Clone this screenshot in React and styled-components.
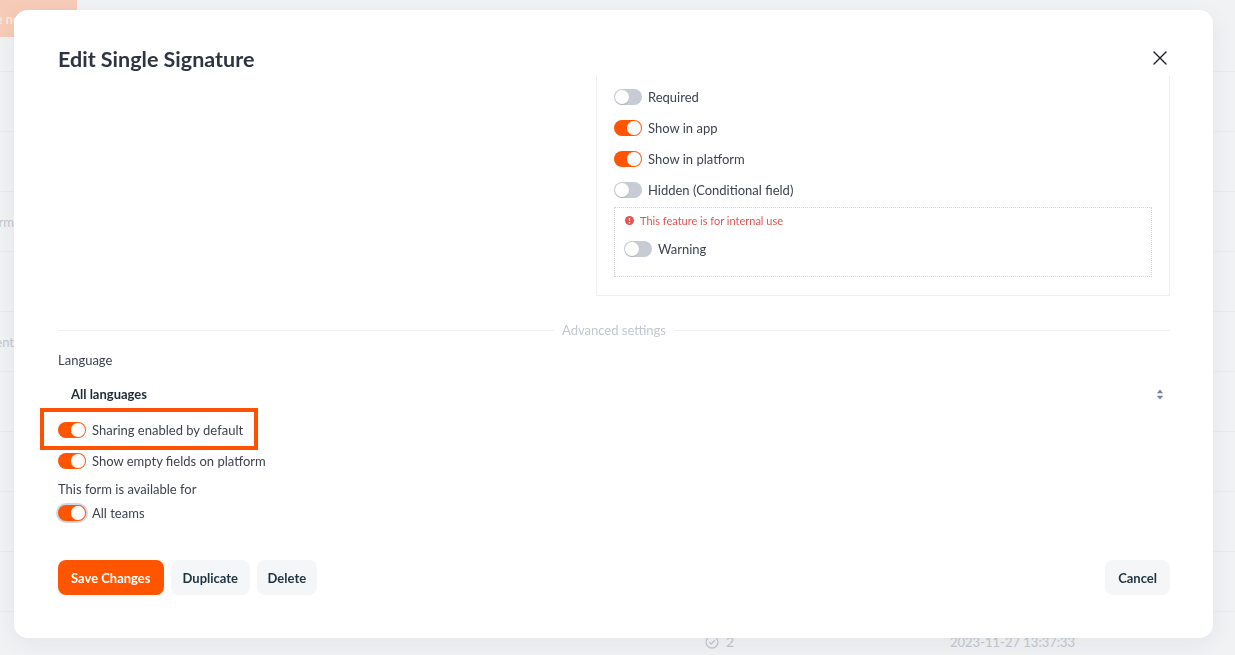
import React from "react";
import styled, { createGlobalStyle, css } from "styled-components";

const GlobalStyle = createGlobalStyle`
  html, body { margin: 0; padding: 0; }
  body {
    font-family: Lato, "Liberation Sans", Arial, sans-serif;
    background: #f1f2f4;
    -webkit-font-smoothing: antialiased;
  }
  * { box-sizing: border-box; }
`;

const ORANGE = "#ff5500";

/* ---------- background page (faded) ---------- */
const Page = styled.div`
  width: 100%;
  height: 655px;
  overflow: hidden;
  background: #f1f2f4;
`;

const TopArea = styled.div`
  height: 72px;
  border-bottom: 1px solid #e9eaed;
`;

const FadedButton = styled.div`
  display: inline-flex;
  align-items: center;
  height: 37px;
  margin-left: -52px;
  padding: 0 16px;
  border-radius: 0 0 10px 10px;
  background: #f6cbb7;
  color: #fbe9e0;
  font-size: 13px;
  font-weight: 700;
  white-space: nowrap;
`;

const BgRow = styled.div`
  display: grid;
  grid-template-columns: 14px 686px 250px 1fr;
  height: 60px;
  align-items: center;
  border-bottom: 1px solid #e9eaed;
  color: #c3c7ce;
  font-size: 13px;
`;

const ClipCell = styled.div`
  display: flex;
  justify-content: flex-end;
  overflow: hidden;
  white-space: nowrap;
`;

const StatusCell = styled.div`
  display: flex;
  align-items: center;
  gap: 7px;
  padding-left: 5px;
  font-size: 14px;
`;

/* ---------- modal ---------- */
const Modal = styled.div`
  position: fixed;
  top: 10px;
  left: 14px;
  width: 1199px;
  height: 628px;
  background: #fff;
  border-radius: 14px;
  box-shadow: 0 6px 24px rgba(20, 30, 50, 0.06);
  padding: 0 43px 43px 44px;
  display: flex;
  flex-direction: column;
`;

const Header = styled.div`
  display: flex;
  align-items: center;
  justify-content: space-between;
  padding-top: 35px;
  margin-bottom: 3px;
`;

const Title = styled.h2`
  margin: 0;
  font-size: 21.5px;
  line-height: 28px;
  font-weight: 700;
  color: #2e3440;
`;

const CloseButton = styled.button`
  border: 0;
  background: none;
  padding: 0;
  width: 16px;
  height: 16px;
  margin-right: 2px;
  margin-top: -2px;
  display: flex;
  align-items: center;
  justify-content: center;
  cursor: pointer;
`;

const TopGrid = styled.div`
  display: grid;
  grid-template-columns: 1fr 574px;
`;

const Panel = styled.div`
  border: 1px solid #eeeff1;
  border-top: none;
  padding: 5px 17px 18px;
`;

const Row = styled.div`
  display: flex;
  align-items: center;
  gap: 6px;
  height: ${(p) => p.$h || 31}px;
  width: fit-content;
  position: relative;
  ${(p) =>
    p.$highlight &&
    css`
      margin-top: 2.5px;
      &::after {
        content: "";
        position: absolute;
        left: -18px;
        right: -15px;
        top: -6.5px;
        bottom: -4.5px;
        border: 4px solid #ff5200;
        pointer-events: none;
      }
    `}
`;

const Label = styled.span`
  font-size: 13px;
  line-height: 16px;
  color: #3d4350;
`;

const ToggleTrack = styled.span`
  display: inline-block;
  position: relative;
  flex: none;
  width: 28px;
  height: 16px;
  border-radius: 8px;
  background: ${(p) => (p.$on ? ORANGE : "#c6cbd4")};
  box-shadow: ${(p) => (p.$focus ? "0 0 0 2px rgba(170,182,205,0.55)" : "none")};
  &::after {
    content: "";
    position: absolute;
    top: 1px;
    left: ${(p) => (p.$on ? "13px" : "1px")};
    width: 14px;
    height: 14px;
    border-radius: 50%;
    background: #fff;
    box-shadow: ${(p) =>
      p.$on ? "0 0 0 0.5px rgba(255,120,60,0.6)" : "0 1px 1px rgba(0,0,0,0.12)"};
  }
`;

const InfoBox = styled.div`
  margin-top: 2px;
  border: 1px dotted #cfd2d8;
  padding: 5px 9px 17px;
  display: flex;
  flex-direction: column;
  gap: 12px;
`;

const Notice = styled.div`
  display: flex;
  align-items: center;
  gap: 6px;
  height: 14px;
  margin-left: 1px;
  font-size: 11px;
  color: #e25454;
`;

const Divider = styled.div`
  margin-top: 27px;
  display: flex;
  align-items: center;
  gap: 8px;
  font-size: 13px;
  line-height: 14px;
  color: #c3c7cf;
  &::before,
  &::after {
    content: "";
    flex: 1;
    height: 1px;
    background: #eef0f2;
  }
`;

const SectionLabel = styled.div`
  font-size: 13px;
  line-height: 16px;
  color: #3d4350;
  margin-top: ${(p) => p.$mt || 0}px;
`;

const Select = styled.div`
  margin-top: 8px;
  height: 36px;
  display: flex;
  align-items: center;
  justify-content: space-between;
  padding: 0 6px 0 13px;
  font-size: 13px;
  font-weight: 700;
  color: #1c2b36;
`;

const Footer = styled.div`
  margin-top: auto;
  display: flex;
  align-items: center;
  gap: 7px;
`;

const Button = styled.button`
  height: 35px;
  padding: 0 ${(p) => p.$px || 13}px;
  border: 0;
  border-radius: 8px;
  font-family: inherit;
  font-size: 13px;
  font-weight: 700;
  cursor: pointer;
  background: ${(p) => (p.$primary ? ORANGE : "#f5f6f7")};
  color: ${(p) => (p.$primary ? "#fff" : "#1e3340")};
  ${(p) => p.$right && css`margin-left: auto;`}
`;

function Toggle({ on, focus }) {
  return <ToggleTrack $on={on} $focus={focus} />;
}

function ToggleRow({ on, focus, children, h, highlight }) {
  return (
    <Row $h={h} $highlight={highlight}>
      <Toggle on={on} focus={focus} />
      <Label>{children}</Label>
    </Row>
  );
}

const CloseIcon = () => (
  <svg width="14" height="14" viewBox="0 0 14 14">
    <path d="M1 1L13 13M13 1L1 13" stroke="#1d1f24" strokeWidth="1.4" strokeLinecap="round" />
  </svg>
);

const AlertIcon = () => (
  <svg width="9" height="9" viewBox="0 0 10 10">
    <circle cx="5" cy="5" r="5" fill="#e25454" />
    <rect x="4.3" y="2" width="1.4" height="3.8" rx="0.7" fill="#fff" />
    <circle cx="5" cy="7.6" r="0.8" fill="#fff" />
  </svg>
);

const SortIcon = () => (
  <svg width="8" height="11" viewBox="0 0 8 11">
    <path d="M4 0.5L7.2 4.2H0.8Z" fill="#7a8499" />
    <path d="M4 10.5L7.2 6.8H0.8Z" fill="#7a8499" />
  </svg>
);

const CheckCircle = () => (
  <svg width="14" height="14" viewBox="0 0 14 14">
    <circle cx="7" cy="7" r="6" fill="none" stroke="#c3c7ce" strokeWidth="1.3" />
    <path d="M4.3 7.2L6.2 9L9.8 5.2" fill="none" stroke="#c3c7ce" strokeWidth="1.3" />
  </svg>
);

export default function App() {
  return (
    <>
      <GlobalStyle />
      <Page>
        <TopArea>
          <FadedButton>Create new form</FadedButton>
        </TopArea>
        <BgRow><ClipCell /></BgRow>
        <BgRow><ClipCell /></BgRow>
        <BgRow><ClipCell>Platform</ClipCell></BgRow>
        <BgRow><ClipCell /></BgRow>
        <BgRow><ClipCell>Incident</ClipCell></BgRow>
        <BgRow><ClipCell /></BgRow>
        <BgRow><ClipCell /></BgRow>
        <BgRow><ClipCell /></BgRow>
        <BgRow><ClipCell /></BgRow>
        <BgRow>
          <ClipCell />
          <div />
          <StatusCell>
            <CheckCircle />2
          </StatusCell>
          <div>2023-11-27 13:37:33</div>
        </BgRow>
      </Page>

      <Modal>
        <Header>
          <Title>Edit Single Signature</Title>
          <CloseButton aria-label="Close">
            <CloseIcon />
          </CloseButton>
        </Header>

        <TopGrid>
          <div />
          <Panel>
            <ToggleRow>Required</ToggleRow>
            <ToggleRow on>Show in app</ToggleRow>
            <ToggleRow on>Show in platform</ToggleRow>
            <ToggleRow>Hidden (Conditional field)</ToggleRow>
            <InfoBox>
              <Notice>
                <AlertIcon />
                This feature is for internal use
              </Notice>
              <ToggleRow h={20}>Warning</ToggleRow>
            </InfoBox>
          </Panel>
        </TopGrid>

        <Divider>Advanced settings</Divider>

        <SectionLabel $mt={15}>Language</SectionLabel>
        <Select>
          All languages
          <SortIcon />
        </Select>

        <ToggleRow on highlight>Sharing enabled by default</ToggleRow>
        <ToggleRow on>Show empty fields on platform</ToggleRow>
        <SectionLabel $mt={4.5}>This form is available for</SectionLabel>
        <ToggleRow on focus h={32}>All teams</ToggleRow>

        <Footer>
          <Button $primary>Save Changes</Button>
          <Button $px={12}>Duplicate</Button>
          <Button $px={10.5}>Delete</Button>
          <Button $right>Cancel</Button>
        </Footer>
      </Modal>
    </>
  );
}
